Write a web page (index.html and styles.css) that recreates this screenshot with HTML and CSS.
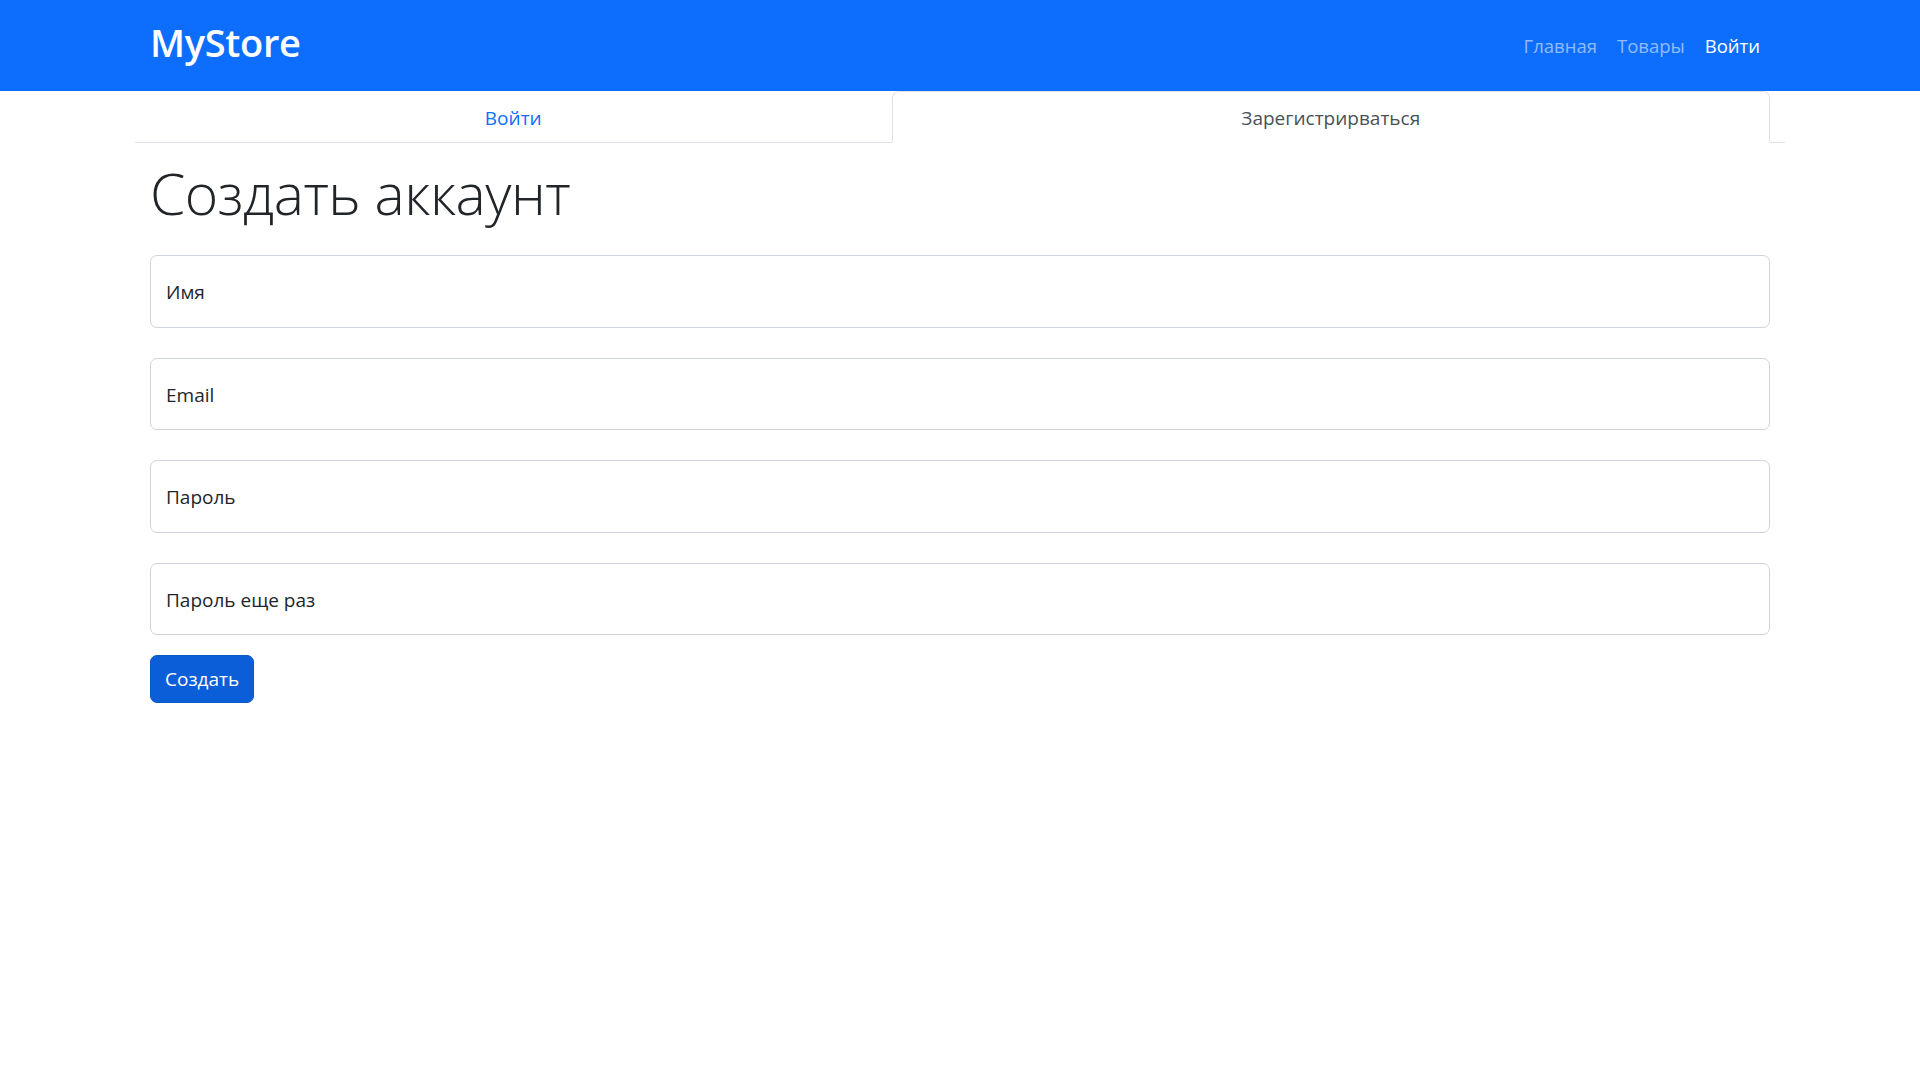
FILE: index.html
```html
<!DOCTYPE html>
<html lang="ru">
<head>
<meta charset="utf-8">
<title>MyStore</title>
<link rel="stylesheet" href="styles.css">
</head>
<body>
<nav class="navbar">
  <div class="navbar-inner">
    <a class="brand" href="#">MyStore</a>
    <ul class="nav-links">
      <li><a class="nav-link" href="#">Главная</a></li>
      <li><a class="nav-link" href="#">Товары</a></li>
      <li><a class="nav-link active" href="#">Войти</a></li>
    </ul>
  </div>
</nav>
<main class="container">
  <ul class="tabs">
    <li class="tab-item"><a class="tab-link" href="#">Войти</a></li>
    <li class="tab-item"><a class="tab-link active" href="#">Зарегистрирваться</a></li>
  </ul>
  <h1 class="title">Создать аккаунт</h1>
  <form class="form">
    <div class="field"><input class="input" type="text" placeholder=" "><label class="label">Имя</label></div>
    <div class="field"><input class="input" type="email" placeholder=" "><label class="label">Email</label></div>
    <div class="field"><input class="input" type="password" placeholder=" "><label class="label">Пароль</label></div>
    <div class="field last"><input class="input" type="password" placeholder=" "><label class="label">Пароль еще раз</label></div>
    <button class="btn" type="button">Создать</button>
  </form>
</main>
</body>
</html>
```

FILE: styles.css
```css
* { box-sizing: border-box; }
html, body { margin: 0; padding: 0; }
body {
  font-family: "Open Sans", "Noto Sans", sans-serif;
  font-size: 20px;
  line-height: 1.5;
  color: #212529;
  background: #fff;
}
a { text-decoration: none; }

.navbar {
  background: #0d6efd;
  height: 91px;
}
.navbar-inner {
  width: 1650px;
  margin: 0 auto;
  padding: 0 15px;
  height: 100%;
  display: flex;
  align-items: center;
  justify-content: space-between;
}
.brand {
  color: #fff;
  font-size: 38px;
  font-weight: 600;
  line-height: 1;
  margin-bottom: 8px;
  letter-spacing: -0.3px;
}
.nav-links {
  list-style: none;
  margin: 0;
  padding: 0;
  display: flex;
}
.nav-link {
  display: block;
  padding: 10px 10px;
  font-size: 18.5px;
  line-height: 30px;
  color: rgba(255, 255, 255, 0.55);
}
.nav-link.active { color: #fff; }

.container {
  width: 1650px;
  margin: 0 auto;
  padding: 0 15px;
}
.tabs {
  list-style: none;
  margin: 0 -15px;
  padding: 0 15px 0 0;
  display: flex;
  border-bottom: 1px solid #dee2e6;
}
.tab-item {
  flex: 1 1 auto;
  text-align: center;
}
.tab-link {
  display: block;
  padding: 11px 20px 9px;
  line-height: 30px;
  font-size: 19px;
  color: #0d6efd;
  border: 1px solid transparent;
  border-top-left-radius: 7px;
  border-top-right-radius: 7px;
  margin-bottom: -1px;
}
.tab-link.active {
  color: #495057;
  background: #fff;
  border-color: #dee2e6 #dee2e6 #fff;
}

.title {
  font-size: 57px;
  font-weight: 300;
  line-height: 72px;
  margin: 14px 0 26px;
  letter-spacing: -0.5px;
}

.form { margin: 0; }
.field {
  position: relative;
  margin-bottom: 30px;
}
.field.last { margin-bottom: 20px; }
.input {
  display: block;
  width: 100%;
  height: 72.5px;
  padding: 20px 15px;
  font-family: inherit;
  font-size: 20px;
  line-height: 30px;
  color: #212529;
  background: #fff;
  border: 1px solid #ced4da;
  border-radius: 7px;
  outline: none;
}
.label {
  position: absolute;
  top: 0;
  left: 0;
  height: 100%;
  padding: 21px 16px 19px;
  font-size: 19px;
  line-height: 32px;
  color: #212529;
  pointer-events: none;
}
.btn {
  display: inline-block;
  font-family: inherit;
  font-size: 19px;
  line-height: 30px;
  padding: 8px 14px;
  color: #fff;
  background: #0b5ed7;
  border: 1px solid #0a58ca;
  border-radius: 7px;
  cursor: pointer;
}
```
